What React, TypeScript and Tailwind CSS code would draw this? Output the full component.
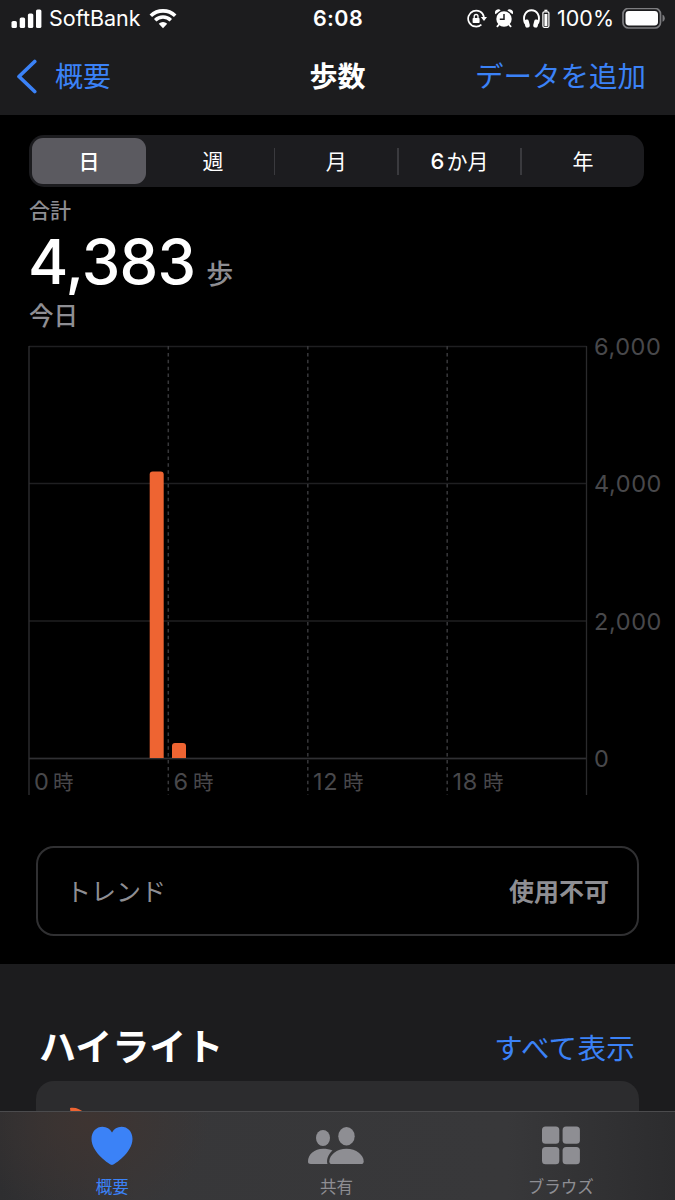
import clsx from "clsx";

const ranges = ["日", "週", "月", "6か月", "年"];

const yTicks = [
  { label: "6,000", y: 6 },
  { label: "4,000", y: 143 },
  { label: "2,000", y: 280.5 },
  { label: "0", y: 418 },
];

const xTicks = [
  { hour: "0", x: 34, unitX: 53 },
  { hour: "6", x: 173.5, unitX: 193 },
  { hour: "12", x: 313, unitX: 343 },
  { hour: "18", x: 452.5, unitX: 483 },
];

function StatusBar() {
  return (
    <div className="grid h-[38px] grid-cols-[1fr_auto_1fr] items-center pl-[11px] pr-[10px] text-white">
      <div className="flex items-center">
        <svg width="31" height="20" viewBox="0 0 31 20" fill="currentColor">
          <rect x="0.5" y="12" width="5.4" height="7" rx="1.6" />
          <rect x="8.7" y="8.5" width="5.4" height="10.5" rx="1.6" />
          <rect x="16.9" y="4.5" width="5.4" height="14.5" rx="1.6" />
          <rect x="25" y="0.5" width="5.4" height="18.5" rx="1.6" />
        </svg>
        <span className="ml-[7px] text-[21.5px] leading-none">SoftBank</span>
        <svg className="ml-[8px]" width="28" height="20" viewBox="0 0 28 20" fill="none" stroke="currentColor">
          <path d="M1.8 6.8A17.5 17.5 0 0 1 26.2 6.8" strokeWidth="3.6" />
          <path d="M6.2 11.2A11.2 11.2 0 0 1 21.8 11.2" strokeWidth="3.5" />
          <path d="M9.8 14.8A6 6 0 0 1 18.2 14.8L14 19.2Z" fill="currentColor" stroke="none" />
        </svg>
      </div>
      <span className="text-[21.5px] font-semibold leading-none tracking-[0.4px]">6:08</span>
      <div className="flex items-center justify-end">
        {/* rotation lock */}
        <svg width="20" height="20" viewBox="0 0 20 20" fill="none" stroke="currentColor" strokeWidth="1.7">
          <path d="M14.4 15.6A8 8 0 1 1 17 8" />
          <path d="M13.8 8H20L17 12Z" fill="currentColor" stroke="none" />
          <rect x="5.6" y="9" width="7" height="5" rx="0.8" fill="currentColor" stroke="none" />
          <path d="M7.2 9V7.4a1.9 1.9 0 0 1 3.8 0V9" strokeWidth="1.3" />
        </svg>
        {/* alarm */}
        <svg className="ml-[8px]" width="18" height="20" viewBox="0 0 18 20" fill="currentColor">
          <circle cx="9" cy="10" r="7.7" />
          <path d="M0.5 5.3A3.3 3.3 0 0 1 5.7 1.3Z" />
          <path d="M17.5 5.3A3.3 3.3 0 0 0 12.3 1.3Z" />
          <path d="M4 15.5 2.4 17.4M14 15.5l1.6 1.9" stroke="currentColor" strokeWidth="1.8" strokeLinecap="round" />
          <path d="M9 5v5.3H4.8" fill="none" stroke="#1c1c1e" strokeWidth="1.5" />
        </svg>
        {/* headphones with battery */}
        <svg className="ml-[10px]" width="27" height="20" viewBox="0 0 27 20" fill="currentColor">
          <path d="M2 14.5C-1 6 3.5 1.3 8.5 1.3S18 6 15 14.5" fill="none" stroke="currentColor" strokeWidth="1.9" />
          <rect x="1.7" y="10.6" width="4.6" height="8" rx="1.9" transform="rotate(-14 4 14.5)" />
          <rect x="10.7" y="10.6" width="4.6" height="8" rx="1.9" transform="rotate(14 13 14.5)" />
          <rect x="19.9" y="2.8" width="6" height="15.5" rx="1.2" fill="none" stroke="currentColor" strokeWidth="1.2" />
          <rect x="21.4" y="5" width="3" height="12" />
          <rect x="21.4" y="0.7" width="3" height="1.5" />
        </svg>
        <span className="ml-[7px] text-[21.5px] leading-none">100%</span>
        <svg className="ml-[8px]" width="43" height="22" viewBox="0 0 43 22">
          <rect x="1" y="0.5" width="37.5" height="19.5" rx="5.5" fill="none" stroke="#7d7d80" strokeWidth="1.7" />
          <rect x="3.5" y="3" width="32.5" height="14.5" rx="3.4" fill="white" />
          <path d="M40.5 6.7C43.5 7.5 43.5 13 40.5 13.8Z" fill="#7d7d80" />
        </svg>
      </div>
    </div>
  );
}

function NavBar() {
  return (
    <div className="grid h-[77px] grid-cols-[1fr_auto_1fr] items-center px-[16px] text-[28px] leading-none text-[#3b82f7]">
      <div className="flex items-center">
        <svg width="22" height="35" viewBox="0 0 22 35" fill="none">
          <path d="M18.7 2.5 3 17.5 18.7 32.5" stroke="currentColor" strokeWidth="3.7" strokeLinecap="round" strokeLinejoin="round" />
        </svg>
        <span className="ml-[17px]">概要</span>
      </div>
      <h1 className="font-bold text-white">歩数</h1>
      <span className="pr-[13px] pt-[2px] text-right text-[28.5px]">データを追加</span>
    </div>
  );
}

function SegmentedControl() {
  return (
    <div className="mx-[29px] flex h-[52px] w-[615px] rounded-[15px] bg-[#1c1c1f] p-[3px] text-[21px] text-white">
      {ranges.map((range, i) => (
        <div
          key={range}
          className={clsx(
            "flex items-center justify-center",
            i === 0 && "mr-[6px] w-[114px] rounded-[11px] bg-[#5b5a60] font-medium",
            i > 0 && i < 4 && "w-[123.3px]",
            i === 4 && "flex-1 pl-[3px]"
          )}
        >
          <span className="flex-1 text-center leading-none">
            {range === "6か月" ? (
              <>
                <span className="mr-[2px] text-[22px] font-medium">6</span>か月
              </>
            ) : (
              range
            )}
          </span>
          {i > 0 && i < 4 && <span className="h-[27px] w-[1.5px] bg-[#3a3a3e]" />}
        </div>
      ))}
    </div>
  );
}

function StepsChart() {
  return (
    <svg className="block overflow-visible" width="675" height="460" viewBox="0 0 675 460">
      <g stroke="#1f1f21" strokeWidth="1.3">
        {yTicks.map((tick) => (
          <line key={tick.label} x1="29" x2="586.5" y1={tick.y + 0.5} y2={tick.y + 0.5} />
        ))}
        <line x1="29" x2="586" y1="418.5" y2="418.5" stroke="#303033" />
        <line x1="29" x2="29" y1="6" y2="455" stroke="#303033" />
        <line x1="586.5" x2="586.5" y1="6" y2="455" stroke="#2a2a2c" />
      </g>
      <g stroke="#38383b" strokeWidth="1.5" strokeDasharray="3.5 3.4">
        <line x1="168.3" x2="168.3" y1="6" y2="455" />
        <line x1="307.8" x2="307.8" y1="6" y2="455" />
        <line x1="447.2" x2="447.2" y1="6" y2="455" />
      </g>
      <g fill="#ee6432">
        <path d="M149.7 418V134.5a3 3 0 0 1 3-3h8a3 3 0 0 1 3 3V418Z" />
        <path d="M172 418V406a3 3 0 0 1 3-3h8a3 3 0 0 1 3 3V418Z" />
      </g>
      <g fill="#48484b" fontSize="23.5" letterSpacing="0.6">
        {yTicks.map((tick) => (
          <text key={tick.label} x="594" y={tick.y + 9}>
            {tick.label}
          </text>
        ))}
        {xTicks.map((tick) => (
          <g key={tick.hour}>
            <text x={tick.x} y="450">
              {tick.hour}
            </text>
            <text x={tick.unitX} y="449.5" fontSize="20.5">
              時
            </text>
          </g>
        ))}
      </g>
    </svg>
  );
}

function TabBar() {
  return (
    <nav className="absolute inset-x-0 bottom-0 grid h-[89px] grid-cols-3 border-t border-[#4b4b4d] bg-[#353537] bg-[radial-gradient(ellipse_120px_100px_at_90px_10px,#3e3431,transparent),linear-gradient(90deg,#2e2e30,#373739_20%,#38383a_75%,#2c2c2e)] pr-[2px] text-[16.5px] leading-none text-[#8e8e93]">
      <div className="flex flex-col items-center pt-[14px] text-[#3b82f7]">
        <svg width="42" height="40" viewBox="0 0 42 40" fill="currentColor">
          <path d="M21 39C19 39 0.5 26.5 0.5 13C0.5 5.5 5.5 0.8 11.5 0.8C15.7 0.8 19 3 21 6.4C23 3 26.3 0.8 30.5 0.8C36.5 0.8 41.5 5.5 41.5 13C41.5 26.5 23 39 21 39Z" />
        </svg>
        <span className="mt-[13px]">概要</span>
      </div>
      <div className="flex flex-col items-center pt-[14px]">
        <svg width="56" height="40" viewBox="0 0 56 40" fill="currentColor">
          <ellipse cx="15" cy="12" rx="7" ry="8" />
          <ellipse cx="38.5" cy="10.2" rx="8.2" ry="9.2" />
          <path d="M24.5 24.4C22 23.3 18.5 22.8 15 22.8C6.5 22.8 0 28.5 0 35.5C0 37.3 1 38 2.8 38H19.5C18.2 33.8 20 28.5 24.5 24.4Z" />
          <path d="M24.2 38C22.2 38 21.3 37 21.3 35.4C21.3 29.2 28.7 22.8 38.5 22.8S55.7 29.2 55.7 35.4C55.7 37 54.8 38 52.8 38Z" />
        </svg>
        <span className="mt-[13px]">共有</span>
      </div>
      <div className="flex flex-col items-center pt-[14px]">
        <svg width="38" height="40" viewBox="0 0 38 40" fill="currentColor">
          <rect x="0" y="0.5" width="17.3" height="17.3" rx="3.5" />
          <rect x="20.6" y="0.5" width="17.3" height="17.3" rx="3.5" />
          <rect x="0" y="21" width="17.3" height="17.3" rx="3.5" />
          <rect x="20.6" y="21" width="17.3" height="17.3" rx="3.5" />
        </svg>
        <span className="mt-[13px]">ブラウズ</span>
      </div>
    </nav>
  );
}

export default function App() {
  return (
    <div
      lang="ja"
      className="relative h-[1200px] w-[675px] overflow-hidden bg-black font-['Inter','Noto_Sans_CJK_JP',sans-serif]"
    >
      <header className="mb-[20px] bg-[#1c1c1e]">
        <StatusBar />
        <NavBar />
      </header>

      <SegmentedControl />

      {/* Summary */}
      <div className="h-[153px] pl-[29px] font-medium text-[#8e8e93]">
        <p className="pt-[13px] text-[21px] leading-[22px]">合計</p>
        <p className="flex h-[81px] items-baseline leading-[79px]">
          <span className="-ml-[1px] text-[61.5px] tracking-[-0.8px] text-white">4,383</span>
          <span className="ml-[11px] text-[27px]">歩</span>
        </p>
        <p className="text-[24.5px] leading-[26px]">今日</p>
      </div>

      <StepsChart />

      {/* Trend */}
      <div className="mx-[36px] mt-[46px] flex h-[90px] items-center justify-between rounded-[18px] border-2 border-[#303032] px-[28px] pt-[3px] text-[25px] text-[#8e8e93]">
        <span>トレンド</span>
        <span className="font-bold">使用不可</span>
      </div>

      {/* Highlights */}
      <section className="mt-[28px] h-[236px] bg-[#1c1c1e] px-[36px]">
        <div className="flex h-[117px] items-center justify-between pl-[3px] pr-[4px] pt-[49px]">
          <h2 className="text-[37px] font-bold leading-none text-white">ハイライト</h2>
          <span className="pt-[5px] text-[28.5px] leading-none tracking-[0.3px] text-[#3b82f7]">すべて表示</span>
        </div>
        <div className="h-[119px] rounded-t-[18px] bg-[#2c2c2e] pl-[33px] pt-[26px]">
          <svg width="20" height="24" viewBox="0 0 20 24" fill="#ee6432">
            <path d="M1 1C6 0 12 2 15 6C19 10 19 18 15 22C8 20 1 8 1 1Z" />
          </svg>
        </div>
      </section>

      <TabBar />
    </div>
  );
}
